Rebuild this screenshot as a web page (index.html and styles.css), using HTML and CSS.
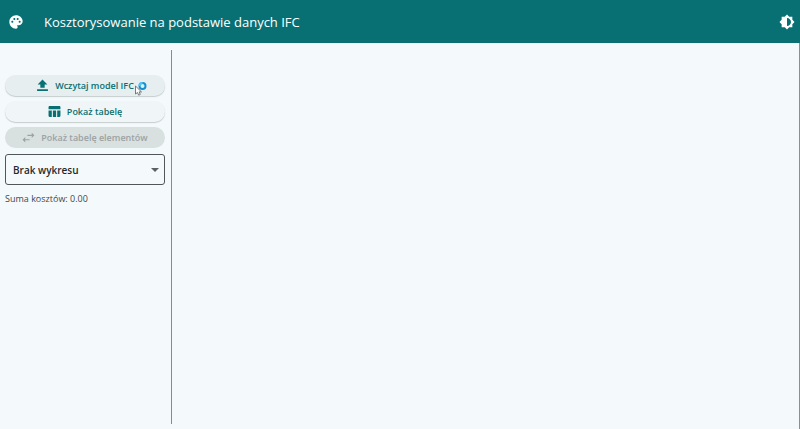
FILE: index.html
```html
<!DOCTYPE html>
<html lang="pl">
<head>
  <meta charset="utf-8">
  <meta name="viewport" content="width=device-width, initial-scale=1">
  <title>Kosztorysowanie na podstawie danych IFC</title>
  <link rel="stylesheet" href="styles.css">
</head>
<body>
  <header class="topbar">
    <button class="icon-button" type="button" aria-label="Paleta kolorów">
      <svg class="icon-app" viewBox="0 0 24 24" aria-hidden="true"><path d="M12 2C6.49 2 2 6.49 2 12s4.49 10 10 10c1.38 0 2.5-1.12 2.5-2.5 0-.61-.23-1.2-.64-1.67-.08-.1-.13-.21-.13-.33 0-.28.22-.5.5-.5H16c3.31 0 6-2.69 6-6C22 6.04 17.51 2 12 2zM6.500 13C5.670 13 5 12.330 5 11.500S5.670 10 6.500 10 8 10.670 8 11.500 7.330 13 6.500 13zm3-4C8.670 9 8 8.330 8 7.500S8.670 6 9.500 6s1.500.67 1.500 1.500S10.330 9 9.500 9zm5 0C13.670 9 13 8.330 13 7.500S13.670 6 14.500 6s1.500.67 1.500 1.500S15.330 9 14.500 9zm3 4c-.83 0-1.500-.67-1.500-1.500s.67-1.500 1.500-1.500 1.500.67 1.500 1.500-.67 1.500-1.500 1.500z"/></svg>
    </button>
    <h1 class="title">Kosztorysowanie na podstawie danych IFC</h1>
    <button class="icon-button" type="button" aria-label="Tryb jasny lub ciemny">
      <svg class="icon-app" viewBox="0 0 24 24" aria-hidden="true"><path d="M20 8.690V4h-4.690L12 .69 8.690 4H4v4.690L.69 12 4 15.310V20h4.690L12 23.310 15.310 20H20v-4.690L23.310 12 20 8.690zM12 18V6c3.310 0 6 2.690 6 6s-2.690 6-6 6z"/></svg>
    </button>
  </header>
  <main class="workspace">
    <section class="sidebar">
      <button class="action action-hover" type="button">
        <svg class="icon" viewBox="0 0 24 24" aria-hidden="true"><path d="M8 16h8v-6h5l-9-9-9 9h5zm-6 3h20v3H2z"/></svg>
        <span>Wczytaj model IFC</span>
        <svg class="pointer" viewBox="0 0 14 14" aria-hidden="true">
          <path class="pointer-arrow" d="M1.500 4v8l2-1.500 1.200 2.700 1.600-.8-1.200-2.500h2.400z"/>
          <circle class="pointer-ring" cx="8.500" cy="4" r="3"/>
          <path class="pointer-glint" d="M5.500 4a3 3 0 0 1 3-3"/>
        </svg>
      </button>
      <button class="action" type="button">
        <svg class="icon" viewBox="0 0 24 24" aria-hidden="true"><path d="M9 10h6v12H9zM17 10h6v10c0 1.100-.9 2-2 2h-4zM21 2H3c-1.100 0-2 .9-2 2v4h22V4c0-1.100-.9-2-2-2zM1 20c0 1.100.9 2 2 2h4V10H1z"/></svg>
        <span>Pokaż tabelę</span>
      </button>
      <button class="action" type="button" disabled>
        <svg class="icon" viewBox="0 0 24 24" aria-hidden="true"><path d="M23 8l-5-5v4H10v2h8v4zM1 16l5 5v-4h8v-2H6v-4z"/></svg>
        <span>Pokaż tabelę elementów</span>
      </button>
      <div class="chart-field">
        <select class="chart-select" aria-label="Wykres">
          <option>Brak wykresu</option>
        </select>
        <svg class="caret" viewBox="0 0 8 4" aria-hidden="true"><path d="M0 0h8L4 4z"/></svg>
      </div>
      <p class="total">Suma kosztów: 0.00</p>
    </section>
    <section class="canvas" aria-label="Obszar modelu"></section>
  </main>
</body>
</html>
```

FILE: styles.css
```css
* {
  box-sizing: border-box;
}

body {
  margin: 0;
  min-height: 100vh;
  display: flex;
  flex-direction: column;
  background: #f4f9fc;
  color: #3f484a;
  font-family: "Open Sans", "Noto Sans", sans-serif;
  font-size: 9px;
}

button,
select {
  font: inherit;
}

.topbar {
  display: flex;
  align-items: center;
  height: 43px;
  padding: 0 5px 0 8px;
  background: #087073;
  color: #fff;
}

.icon-button {
  display: flex;
  padding: 0;
  border: 0;
  background: none;
  color: inherit;
}

.icon-app {
  width: 16px;
  height: 16px;
  fill: currentColor;
}

.title {
  flex: 1;
  margin: 0 0 0 20px;
  font-size: 13px;
  font-weight: 400;
  line-height: 20px;
}

.workspace {
  flex: 1;
  display: flex;
  padding: 7px 0 5px;
  border-right: 1px solid #8b8f90;
}

.sidebar {
  display: flex;
  flex-direction: column;
  width: 172px;
  padding: 25px 6px 0 5px;
  border-right: 1px solid #5f9c9f;
}

.action {
  position: relative;
  display: flex;
  align-items: center;
  justify-content: center;
  gap: 6px;
  height: 21px;
  margin: 0 0 5px;
  padding: 0;
  border: 0;
  border-radius: 11px;
  background: #f0f6f7;
  box-shadow: 0 1px 1px #c5cccd;
  color: #087073;
  font-weight: 600;
  line-height: 14px;
}

.action-hover {
  background: #e6eeef;
}

.action:disabled {
  background: #d9e0e0;
  box-shadow: none;
  color: #9ca3a4;
}

.icon {
  width: 13px;
  height: 13px;
  fill: currentColor;
}

.pointer {
  position: absolute;
  top: 7px;
  right: 17px;
  width: 14px;
  height: 14px;
}

.pointer-arrow {
  fill: #fff;
  stroke: #555b60;
  stroke-width: 0.8;
}

.pointer-ring {
  fill: #d8f3fd;
  stroke: #168fd0;
  stroke-width: 2;
}

.pointer-glint {
  fill: none;
  stroke: #50c8f0;
  stroke-width: 2;
}

.chart-field {
  position: relative;
  margin: 1px 0 7px;
}

.chart-select {
  display: block;
  appearance: none;
  width: 100%;
  height: 31px;
  padding: 0 20px 0 7px;
  border: 1px solid #50575a;
  border-radius: 3px;
  background: transparent;
  color: #23292b;
  font-size: 10px;
  font-weight: 600;
}

.caret {
  position: absolute;
  top: 14px;
  right: 6px;
  width: 8px;
  height: 4px;
  fill: #596164;
  pointer-events: none;
}

.total {
  margin: 0;
  line-height: 14px;
}

.canvas {
  flex: 1;
}
```
